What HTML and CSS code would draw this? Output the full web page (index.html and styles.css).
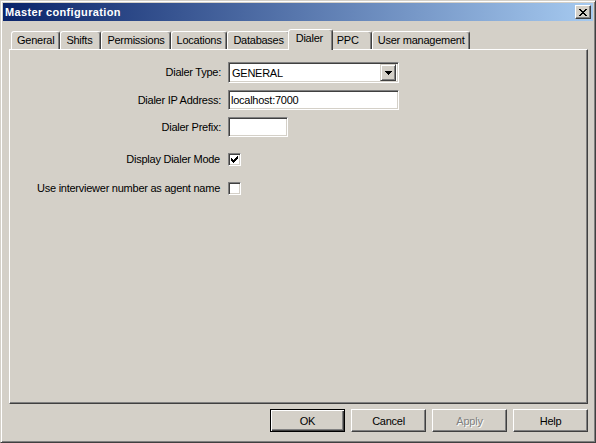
FILE: index.html
```html
<!DOCTYPE html>
<html>
<head>
<meta charset="utf-8">
<title>Master configuration</title>
<link rel="stylesheet" href="styles.css">
</head>
<body>
<div class="window">
  <div class="titlebar">
    <span class="title">Master configuration</span>
    <button class="close" aria-label="Close">
      <svg width="8" height="7" viewBox="0 0 8 7"><path d="M0 0h2v1H0z M6 0h2v1H6z M1 1h2v1H1z M5 1h2v1H5z M2 2h4v1H2z M3 3h2v1H3z M2 4h4v1H2z M1 5h2v1H1z M5 5h2v1H5z M0 6h2v1H0z M6 6h2v1H6z" fill="#000"/></svg>
    </button>
  </div>
  <div class="body">
    <div class="tabs">
      <div class="tab">General</div>
      <div class="tab">Shifts</div>
      <div class="tab">Permissions</div>
      <div class="tab">Locations</div>
      <div class="tab">Databases</div>
      <div class="tab active">Dialer</div>
      <div class="tab">PPC</div>
      <div class="tab">User management</div>
    </div>
    <div class="panel">
      <div class="form">
        <div class="row">
          <div class="label">Dialer Type:</div>
          <div class="field select">
            <span class="value">GENERAL</span>
            <span class="drop">
              <svg width="7" height="4" viewBox="0 0 7 4"><path d="M0 0h7v1H0z M1 1h5v1H1z M2 2h3v1H2z M3 3h1v1H3z" fill="#000"/></svg>
            </span>
          </div>
        </div>
        <div class="row">
          <div class="label">Dialer IP Address:</div>
          <div class="field input"><span class="value">localhost:7000</span></div>
        </div>
        <div class="row">
          <div class="label">Dialer Prefix:</div>
          <div class="field input short"></div>
        </div>
        <div class="row check">
          <div class="label">Display Dialer Mode</div>
          <div class="checkbox">
            <svg width="7" height="7" viewBox="0 0 7 7"><path d="M0 2h1v3H0z M1 3h1v3H1z M2 4h1v3H2z M3 3h1v3H3z M4 2h1v3H4z M5 1h1v3H5z M6 0h1v3H6z" fill="#000"/></svg>
          </div>
        </div>
        <div class="row check">
          <div class="label">Use interviewer number as agent name</div>
          <div class="checkbox"></div>
        </div>
      </div>
    </div>
    <div class="buttons">
      <button class="btn default">OK</button>
      <button class="btn">Cancel</button>
      <button class="btn disabled">Apply</button>
      <button class="btn">Help</button>
    </div>
  </div>
</div>
</body>
</html>
```
FILE: styles.css
```css
* { box-sizing: border-box; }
html, body { margin: 0; padding: 0; }
body {
  width: 596px;
  height: 443px;
  overflow: hidden;
  background: #d4d0c8;
  font-family: "Liberation Sans", Arial, sans-serif;
  font-size: 11px;
  letter-spacing: -0.25px;
  color: #000;
}
.window {
  width: 596px;
  height: 443px;
  background: #d4d0c8;
  border: 1px solid;
  border-color: #d4d0c8 #404040 #404040 #d4d0c8;
  box-shadow: inset 1px 1px #fff, inset -1px -1px #808080;
  padding: 2px;
  display: flex;
  flex-direction: column;
}
.titlebar {
  height: 18px;
  flex: none;
  background: linear-gradient(to right, #0a246a, #a6caf0);
  display: flex;
  align-items: center;
  justify-content: space-between;
  padding: 0 2px;
}
.title {
  color: #fff;
  font-weight: bold;
  font-size: 11px;
  letter-spacing: 0.35px;
}
.close {
  width: 16px;
  height: 14px;
  padding: 0;
  margin: 0;
  background: #d4d0c8;
  border: 1px solid;
  border-color: #fff #404040 #404040 #fff;
  box-shadow: inset -1px -1px #808080;
  display: flex;
  align-items: center;
  justify-content: center;
}
.close svg { display: block; }
.body {
  flex: 1;
  display: flex;
  flex-direction: column;
  padding: 8px 5px 0 6px;
}
.tabs {
  display: flex;
  align-items: flex-end;
  height: 21px;
  padding-left: 2px;
  margin-bottom: -1px;
  position: relative;
  z-index: 1;
}
.tab {
  height: 18px;
  margin-bottom: 1px;
  min-width: 41px;
  padding: 2px 5px 0 5px;
  border: 1px solid;
  border-bottom: none;
  border-color: #fff #404040 transparent #fff;
  box-shadow: inset -1px 0 #808080;
  border-radius: 3px 3px 0 0;
  background: #d4d0c8;
  line-height: 13px;
  white-space: nowrap;
}
.tab.active {
  height: 21px;
  min-width: 45px;
  margin: 0 -2px;
  padding: 2px 7px 0 7px;
  position: relative;
  z-index: 2;
}
.panel {
  flex: none;
  height: 355px;
  border: 1px solid;
  border-color: #fff #404040 #404040 #fff;
  box-shadow: inset -1px -1px #808080;
}
.form {
  display: flex;
  flex-direction: column;
  gap: 7px;
  padding-top: 12px;
}
.row {
  display: flex;
  align-items: center;
  gap: 7px;
}
.row.check { margin-top: 9px; gap: 8px; }
.label {
  width: 211px;
  text-align: right;
  white-space: nowrap;
  line-height: 13px;
}
.row.check .label { width: 210px; }
.field {
  background: #fff;
  border: 1px solid;
  border-color: #808080 #fff #fff #808080;
  box-shadow: inset 1px 1px #404040, inset -1px -1px #d4d0c8;
  display: flex;
  align-items: center;
  padding: 0 2px;
  width: 171px;
}
.select { height: 21px; padding-right: 2px; justify-content: space-between; }
.select .value { padding-left: 1px; }
.input { height: 20px; }
.input.short { width: 60px; }
.drop {
  width: 16px;
  height: 17px;
  background: #d4d0c8;
  border: 1px solid;
  border-color: #d4d0c8 #404040 #404040 #d4d0c8;
  box-shadow: inset 1px 1px #fff, inset -1px -1px #808080;
  display: flex;
  align-items: center;
  justify-content: center;
}
.drop svg { display: block; }
.checkbox {
  width: 13px;
  height: 13px;
  background: #fff;
  border: 1px solid;
  border-color: #808080 #fff #fff #808080;
  box-shadow: inset 1px 1px #404040, inset -1px -1px #d4d0c8;
  display: flex;
  align-items: center;
  justify-content: center;
}
.checkbox svg { display: block; }
.buttons {
  display: flex;
  justify-content: flex-end;
  gap: 6px;
  margin-top: 5px;
}
.btn {
  width: 75px;
  height: 23px;
  margin: 0;
  padding: 0;
  font: inherit;
  letter-spacing: inherit;
  color: #000;
  background: #d4d0c8;
  border: 1px solid;
  border-color: #fff #404040 #404040 #fff;
  box-shadow: inset -1px -1px #808080;
  display: flex;
  align-items: center;
  justify-content: center;
}
.btn.default {
  border-color: #000;
  box-shadow: inset 1px 1px #fff, inset -1px -1px #404040, inset -2px -2px #808080;
}
.btn.disabled {
  color: #808080;
  text-shadow: 1px 1px #fff;
}
```
